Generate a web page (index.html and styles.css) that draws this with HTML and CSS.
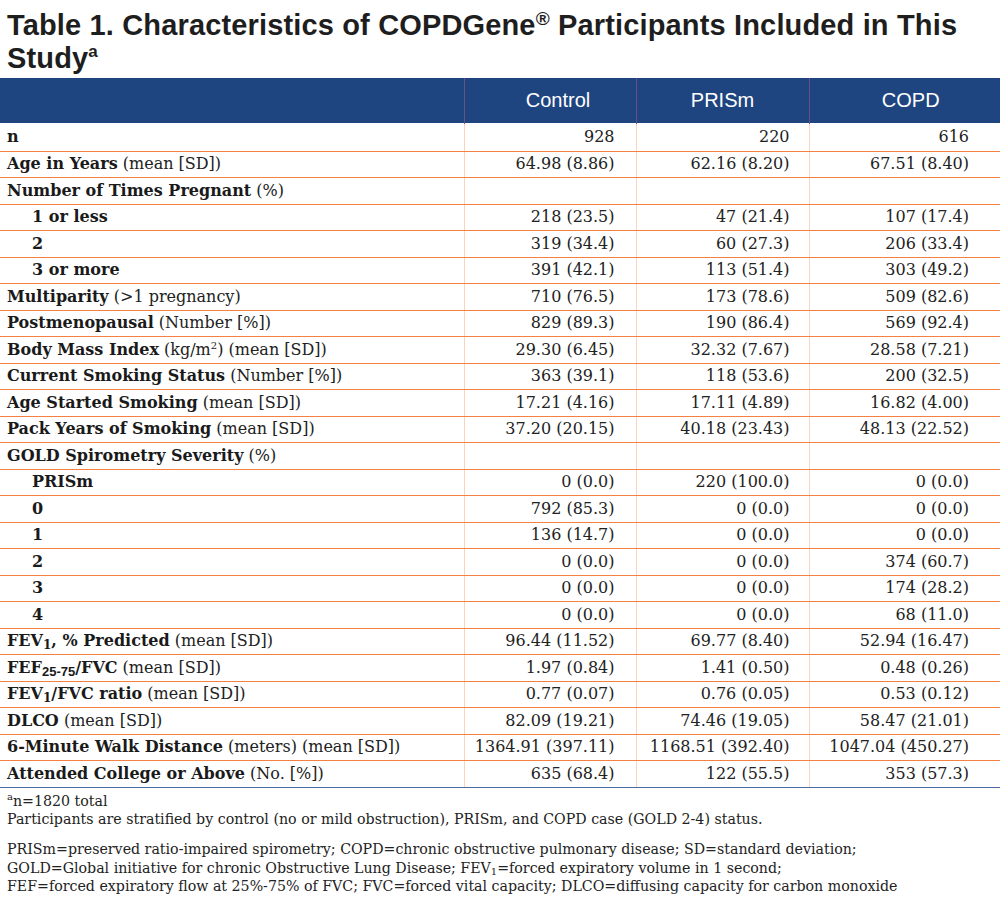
FILE: index.html
```html
<!DOCTYPE html>
<html>
<head>
<meta charset="utf-8">
<link rel="stylesheet" href="styles.css">
</head>
<body>
<h1 class="title">Table 1. Characteristics of COPDGene<sup class="reg">®</sup> Participants Included in This Study<sup class="sup-a">a</sup></h1>
<table class="data">
  <colgroup>
    <col class="c-label"><col class="c-ctrl"><col class="c-prism"><col class="c-copd">
  </colgroup>
  <thead>
    <tr><th></th><th>Control</th><th>PRISm</th><th>COPD</th></tr>
  </thead>
  <tbody>
    <tr class="first"><td><b>n</b></td><td>928</td><td>220</td><td>616</td></tr>
    <tr><td><b>Age in Years</b> (mean [SD])</td><td>64.98 (8.86)</td><td>62.16 (8.20)</td><td>67.51 (8.40)</td></tr>
    <tr><td><b>Number of Times Pregnant</b> (%)</td><td></td><td></td><td></td></tr>
    <tr><td class="sub"><b>1 or less</b></td><td>218 (23.5)</td><td>47 (21.4)</td><td>107 (17.4)</td></tr>
    <tr><td class="sub"><b>2</b></td><td>319 (34.4)</td><td>60 (27.3)</td><td>206 (33.4)</td></tr>
    <tr><td class="sub"><b>3 or more</b></td><td>391 (42.1)</td><td>113 (51.4)</td><td>303 (49.2)</td></tr>
    <tr><td><b>Multiparity</b> (&gt;1 pregnancy)</td><td>710 (76.5)</td><td>173 (78.6)</td><td>509 (82.6)</td></tr>
    <tr><td><b>Postmenopausal</b> (Number [%])</td><td>829 (89.3)</td><td>190 (86.4)</td><td>569 (92.4)</td></tr>
    <tr><td><b>Body Mass Index</b> (kg/m<sup class="sm">2</sup>) (mean [SD])</td><td>29.30 (6.45)</td><td>32.32 (7.67)</td><td>28.58 (7.21)</td></tr>
    <tr><td><b>Current Smoking Status</b> (Number [%])</td><td>363 (39.1)</td><td>118 (53.6)</td><td>200 (32.5)</td></tr>
    <tr><td><b>Age Started Smoking</b> (mean [SD])</td><td>17.21 (4.16)</td><td>17.11 (4.89)</td><td>16.82 (4.00)</td></tr>
    <tr><td><b>Pack Years of Smoking</b> (mean [SD])</td><td>37.20 (20.15)</td><td>40.18 (23.43)</td><td>48.13 (22.52)</td></tr>
    <tr><td><b>GOLD Spirometry Severity</b> (%)</td><td></td><td></td><td></td></tr>
    <tr><td class="sub"><b>PRISm</b></td><td>0 (0.0)</td><td>220 (100.0)</td><td>0 (0.0)</td></tr>
    <tr><td class="sub"><b>0</b></td><td>792 (85.3)</td><td>0 (0.0)</td><td>0 (0.0)</td></tr>
    <tr><td class="sub"><b>1</b></td><td>136 (14.7)</td><td>0 (0.0)</td><td>0 (0.0)</td></tr>
    <tr><td class="sub"><b>2</b></td><td>0 (0.0)</td><td>0 (0.0)</td><td>374 (60.7)</td></tr>
    <tr><td class="sub"><b>3</b></td><td>0 (0.0)</td><td>0 (0.0)</td><td>174 (28.2)</td></tr>
    <tr><td class="sub"><b>4</b></td><td>0 (0.0)</td><td>0 (0.0)</td><td>68 (11.0)</td></tr>
    <tr><td><b>FEV<sub class="sb">1</sub>, % Predicted</b> (mean [SD])</td><td>96.44 (11.52)</td><td>69.77 (8.40)</td><td>52.94 (16.47)</td></tr>
    <tr><td><b>FEF<sub class="sb sans">25-75</sub>/FVC</b> (mean [SD])</td><td>1.97 (0.84)</td><td>1.41 (0.50)</td><td>0.48 (0.26)</td></tr>
    <tr><td><b>FEV<sub class="sb">1</sub>/FVC ratio</b> (mean [SD])</td><td>0.77 (0.07)</td><td>0.76 (0.05)</td><td>0.53 (0.12)</td></tr>
    <tr><td><b>DLCO</b> (mean [SD])</td><td>82.09 (19.21)</td><td>74.46 (19.05)</td><td>58.47 (21.01)</td></tr>
    <tr><td><b>6-Minute Walk Distance</b> (meters) (mean [SD])</td><td>1364.91 (397.11)</td><td>1168.51 (392.40)</td><td>1047.04 (450.27)</td></tr>
    <tr class="last"><td><b>Attended College or Above</b> (No. [%])</td><td>635 (68.4)</td><td>122 (55.5)</td><td>353 (57.3)</td></tr>
  </tbody>
</table>
<div class="notes">
  <p><sup class="fn">a</sup>n=1820 total<br>Participants are stratified by control (no or mild obstruction), PRISm, and COPD case (GOLD 2-4) status.</p>
  <p>PRISm=preserved ratio-impaired spirometry; COPD=chronic obstructive pulmonary disease; SD=standard deviation;<br>GOLD=Global initiative for chronic Obstructive Lung Disease; FEV<sub class="fsb">1</sub>=forced expiratory volume in 1 second;<br>FEF=forced expiratory flow at 25%-75% of FVC; FVC=forced vital capacity; DLCO=diffusing capacity for carbon monoxide</p>
</div>
</body>
</html>
```

FILE: styles.css
```css
html, body {
  margin: 0;
  padding: 0;
  background: #ffffff;
}
body {
  width: 1000px;
  overflow: hidden;
  color: #1a1a1a;
}
.title {
  margin: 0;
  padding: 9px 20px 0 7px;
  height: 78px;
  box-sizing: border-box;
  font-family: "Liberation Sans", Arial, sans-serif;
  font-weight: bold;
  font-size: 29px;
  line-height: 33px;
  letter-spacing: 0.15px;
  color: #1e1e1e;
}
.title .reg {
  font-size: 19px;
  vertical-align: 10px;
  line-height: 0;
}
.title .sup-a {
  font-size: 17px;
  vertical-align: 11px;
  line-height: 0;
}
.data {
  margin: 0;
  width: 1000px;
  border-collapse: collapse;
  table-layout: fixed;
  font-family: "DejaVu Serif", serif;
  font-size: 16px;
  color: #222;
}
.c-label { width: 464px; }
.c-ctrl { width: 172px; }
.c-prism { width: 173px; }
.c-copd { width: 191px; }
.data thead th {
  height: 45px;
  padding: 0;
  background: #1f4580;
  color: #ffffff;
  font-family: "Liberation Sans", Arial, sans-serif;
  font-weight: normal;
  font-size: 20px;
  text-align: center;
  border-left: 1px solid #6b4f80;
}
.data thead th:first-child { border-left: none; }
.data thead th:nth-child(2) { padding-left: 16px; }
.data thead th:nth-child(4) { padding-left: 12px; }
.data td {
  height: 25.5px;
  padding: 0 21px 0 0;
  text-align: right;
  white-space: nowrap;
  border-bottom: 1px solid #f5803f;
  border-left: 1px solid #fbd3b8;
  line-height: 18px;
}
.data td:nth-child(3) { padding-right: 19px; }
.data td:nth-child(4) { padding-right: 31px; }
.data td:first-child {
  text-align: left;
  padding-left: 7px;
  padding-right: 0;
  border-left: none;
}
.data td.sub { padding-left: 32px; }
.data tr.first td { height: 26.5px; border-top: 1px solid #ffffff; }
.data tr.last td { border-bottom: 1px solid #4d6aa6; }
.data b { font-weight: bold; color: #1a1a1a; }
.sm { font-size: 10px; vertical-align: 6px; line-height: 0; }
.sb { font-size: 12px; vertical-align: -3px; line-height: 0; }
.sb.sans { font-family: "Liberation Sans", Arial, sans-serif; font-weight: bold; font-size: 13px; }
.notes {
  padding: 4px 0 0 7px;
  font-family: "DejaVu Serif", serif;
  font-size: 14.2px;
  line-height: 18.5px;
  color: #222;
}
.notes p { margin: 0 0 11.5px 0; }
.fn { font-size: 10px; vertical-align: 6px; line-height: 0; }
.fsb { font-size: 10px; vertical-align: -2px; line-height: 0; }
```
